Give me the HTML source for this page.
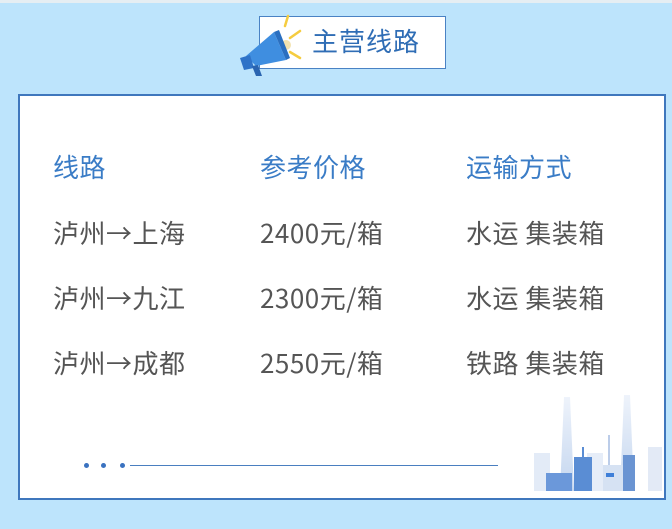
<!DOCTYPE html>
<html><head><meta charset="utf-8"><style>
*{margin:0;padding:0;box-sizing:border-box}
body{width:672px;height:529px;background:#bde4fc;position:relative;overflow:hidden;font-family:"Noto Sans CJK SC","Liberation Sans",sans-serif}
.badge{position:absolute;left:259px;top:16px;width:187px;height:53px;background:#fff;border:1.5px solid #4a82c4}
.badge span{position:absolute;left:52px;top:7px;font-size:26px;line-height:34px;color:#2f6db5;letter-spacing:1px}
.panel{position:absolute;left:18px;top:94px;width:648px;height:406px;background:#fff;border:2px solid #3f77bd}
.t{position:absolute;font-size:26px;letter-spacing:0.5px;color:#555;white-space:nowrap;line-height:30px}
.h{color:#3a7cc6}
.dot{position:absolute;width:5px;height:5px;border-radius:50%;background:#3a72c0;top:463px}
</style></head><body>
<div style="position:absolute;left:0;top:0;width:672px;height:3px;background:#e6eef3"></div>
<div class="badge"><span>主营线路</span></div>
<svg style="position:absolute;left:236px;top:12px" width="72" height="64" viewBox="0 0 72 64">
<g stroke="#f5cc40" stroke-width="2.5" stroke-linecap="round">
<line x1="52" y1="4" x2="49" y2="14"/><line x1="54" y1="26" x2="64" y2="19"/><line x1="54" y1="40" x2="64" y2="46"/></g>
<circle cx="50" cy="33" r="5" fill="#f3e3b0"/>
<polygon points="10,44 38,20 50,48 20,54" fill="#3f8ee0"/>
<polygon points="38,20 43,18 54,46 50,48" fill="#2a6fc0"/>
<polygon points="4,46 14,43 18,56 8,58" fill="#2f73c8"/>
<polygon points="16,54 22,53 26,64 20,64" fill="#2a64b0"/>
</svg>
<div class="panel"></div>
<div class="t h" style="left:53px;top:152px">线路</div>
<div class="t h" style="left:260px;top:152px">参考价格</div>
<div class="t h" style="left:466px;top:152px">运输方式</div>
<div class="t" style="left:53px;top:218px">泸州→上海</div>
<div class="t" style="left:260px;top:218px">2400元/箱</div>
<div class="t" style="left:466px;top:218px">水运 集装箱</div>
<div class="t" style="left:53px;top:283px">泸州→九江</div>
<div class="t" style="left:260px;top:283px">2300元/箱</div>
<div class="t" style="left:466px;top:283px">水运 集装箱</div>
<div class="t" style="left:53px;top:348px">泸州→成都</div>
<div class="t" style="left:260px;top:348px">2550元/箱</div>
<div class="t" style="left:466px;top:348px">铁路 集装箱</div>
<div class="dot" style="left:84px"></div>
<div class="dot" style="left:101px"></div>
<div class="dot" style="left:120px"></div>
<div style="position:absolute;left:130px;top:465px;width:368px;height:1px;background:#4a7fc0"></div>
<svg style="position:absolute;left:530px;top:395px" width="134" height="100" viewBox="0 0 134 100">
<defs><linearGradient id="g" x1="0" y1="0" x2="0" y2="1"><stop offset="0" stop-color="#eef3fb"/><stop offset="1" stop-color="#c4d6ef"/></linearGradient></defs>
<rect x="4" y="58" width="16" height="38" fill="#e3ebf7"/>
<polygon points="34,2 40,2 44,96 30,96" fill="url(#g)"/>
<polygon points="94,0 100,0 104,96 90,96" fill="url(#g)"/>
<rect x="57" y="58" width="16" height="38" fill="#e6edf8"/>
<rect x="73" y="70" width="20" height="26" fill="#d6e2f3"/>
<rect x="78" y="40" width="2" height="30" fill="#bccde9"/>
<rect x="118" y="52" width="14" height="44" fill="#e3eaf6"/>
<rect x="16" y="78" width="26" height="18" fill="#6b98da"/>
<rect x="44" y="62" width="18" height="34" fill="#5a8dd4"/>
<rect x="52" y="52" width="2" height="10" fill="#5a8dd4"/>
<rect x="93" y="60" width="12" height="36" fill="#6a94d2"/>
<rect x="76" y="78" width="8" height="4" fill="#3f7fd8"/>
</svg>
</body></html>
